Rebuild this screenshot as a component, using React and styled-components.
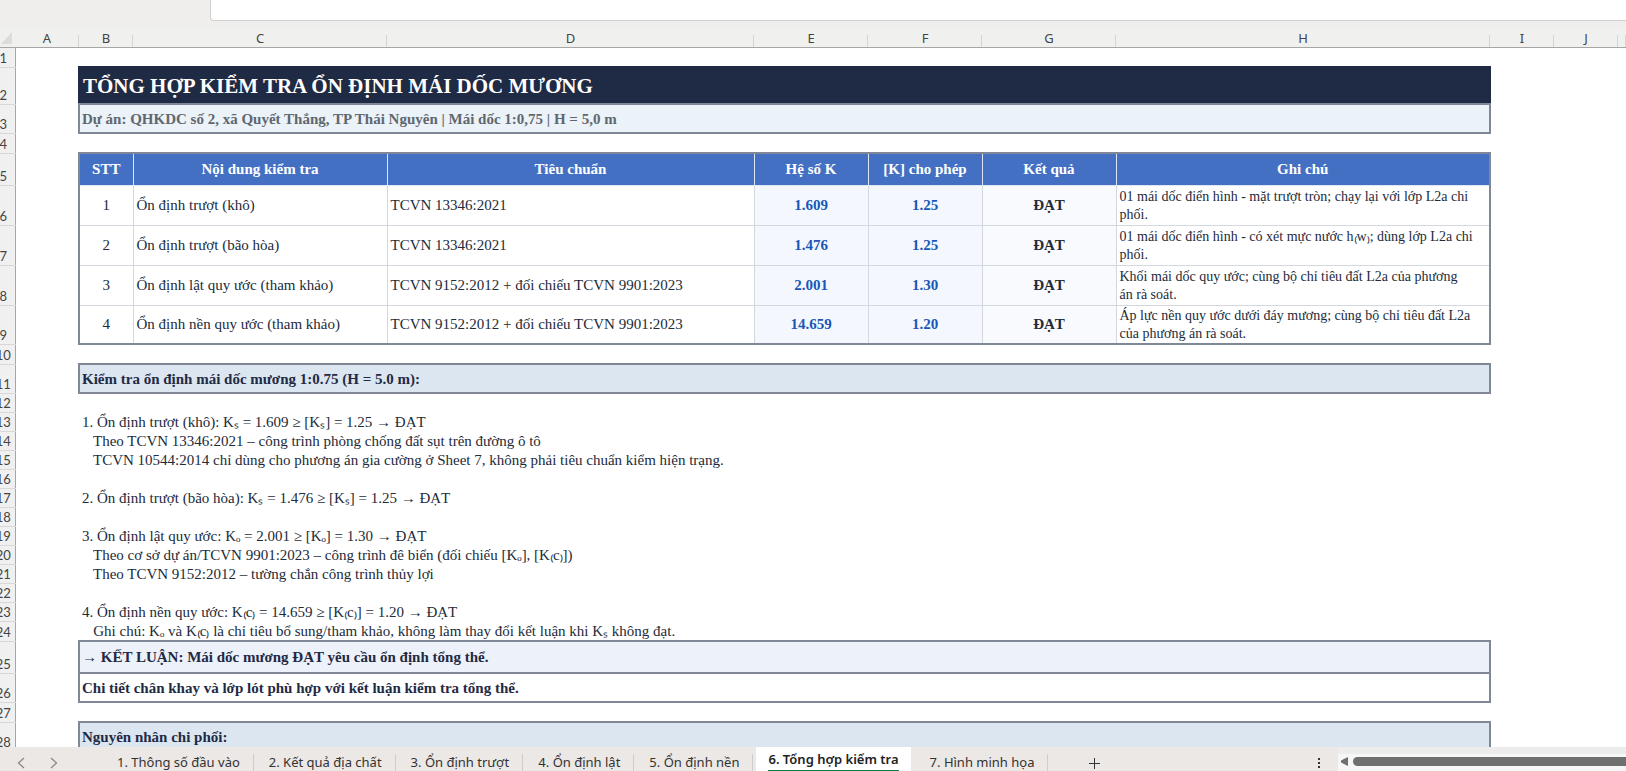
import React from "react";
import styled, {createGlobalStyle} from "styled-components";

const GlobalStyle = createGlobalStyle`
    * {
        box-sizing: border-box;
    }

    body {
        margin: 0;
        overflow: hidden;
        background-color: #fff;
    }
`;

const UI_FONT = `"Noto Sans", "Open Sans", sans-serif`;
const CELL_FONT = `"Liberation Serif", "Times New Roman", serif`;

const NAVY = "#1f2a44";
const FRAME = "#808797";
const LINE = "#d3d7de";

const Whole = styled.div`
    height: 100vh;

    display: flex;
    flex-direction: column;

    font-family: ${UI_FONT};
    background-color: #fff;
`;

/* FORMULA BAR */
const FormulaBar = styled.header`
    height: 27px;
    flex: none;
    padding: 0 0 6px 210px;

    display: flex;

    background-color: #f0eeec;
`;

const FormulaInput = styled.textarea`
    flex: 1;
    height: 21px;
    padding: 0 8px;

    border: 1px solid #d2d0ce;
    border-width: 0 0 1px 1px;
    border-radius: 0 0 0 4px;
    outline: none;
    resize: none;

    background-color: #fff;
`;

/* SHEET */
const SheetArea = styled.main`
    flex: 1;
    min-height: 0;
    overflow: hidden;
`;

/* the row numbers are scrolled partly out of the window */
const Sheet = styled.table`
    width: calc(100% + 8px);
    margin-left: -8px;

    table-layout: fixed;
    border-collapse: collapse;
`;

const Col = styled.col`
    width: ${(props) => (props.$w ? `${props.$w}px` : "auto")};
`;

const HeadRow = styled.tr`
    height: 20px;
`;

const ColHead = styled.th`
    padding: 3px 0 0;

    font-size: 13px;
    font-weight: 400;
    line-height: 16px;
    color: #444;

    border-bottom: 1px solid #a6a6a6;
    background: linear-gradient(#d4d4d4, #d4d4d4) right bottom / 1px 12px no-repeat #f0f0ef;
`;

const Corner = styled.td`
    padding: 0 3px 3px 0;

    text-align: right;
    vertical-align: bottom;
    line-height: 0;

    border-bottom: 1px solid #a6a6a6;
    background-color: #f0f0ef;
`;

const Row = styled.tr`
    height: ${(props) => props.$h}px;
`;

const RowHead = styled.th`
    padding: 0 0 1px;

    font-family: Lato, ${UI_FONT};
    font-size: 13px;
    font-weight: 400;
    line-height: 16px;
    color: #444;
    vertical-align: bottom;

    border-right: 1px solid #a6a6a6;
    border-bottom: 1px solid #d8d8d8;
    background-color: #f0f0f0;
`;

const Blank = styled.td`
    padding: 0;
`;

const Band = styled.td`
    padding: 0 2px;

    font-family: ${CELL_FONT};
    font-size: 15px;
    font-weight: 700;
    line-height: 18px;
    color: ${(props) => props.$color || NAVY};
    white-space: nowrap;

    border: 2px solid ${FRAME};
    background-color: ${(props) => props.$bg || "#fff"};
`;

const TitleBand = styled(Band)`
    padding: 0 3px;

    font-size: 21px;
    line-height: 24px;
    color: #fff;

    border-color: ${NAVY} ${NAVY} ${FRAME};
    background-color: ${NAVY};
`;

const TextLine = styled.td`
    padding: 1px 3px 0;

    font-family: ${CELL_FONT};
    font-size: 15px;
    line-height: 18px;
    color: #222b3a;
    white-space: pre;
`;

const TableHead = styled.th`
    padding: 0;

    font-family: ${CELL_FONT};
    font-size: 15px;
    line-height: 18px;
    color: #fff;

    border: 1px solid #dfe6f3;
    border-top: 2px solid ${FRAME};
    background-color: #4470c4;

    &:nth-child(3) {
        border-left: 2px solid ${FRAME};
    }

    &:nth-child(9) {
        border-right: 2px solid ${FRAME};
    }
`;

const Data = styled.td`
    padding: 0 3px;

    font-family: ${CELL_FONT};
    font-size: 15px;
    font-weight: ${(props) => (props.$bold ? 700 : 400)};
    line-height: 18px;
    text-align: ${(props) => props.$align || "left"};
    color: ${(props) => props.$color || "#222b3a"};

    border: 1px solid ${LINE};
    background-color: ${(props) => props.$bg || "#fff"};

    &:nth-child(3) {
        border-left: 2px solid ${FRAME};
    }
`;

const Note = styled(Data)`
    padding: 1px 0 0 3px;

    font-size: 14px;
    white-space: pre-line;

    border-right: 2px solid ${FRAME};
`;

const DataRow = styled(Row)`
    ${Data} {
        border-bottom: ${(props) => (props.$last ? `2px solid ${FRAME}` : `1px solid ${LINE}`)};
    }
`;

/* SHEET TABS */
const TabBar = styled.footer`
    height: 24px;
    flex: none;
    overflow: hidden;

    display: flex;
    align-items: flex-start;

    background-color: #ebe8e6;
`;

const IconButton = styled.button`
    width: ${(props) => props.$w || 33}px;
    height: 32px;
    flex: none;
    padding: 0;

    display: flex;
    align-items: center;
    justify-content: center;

    color: ${(props) => props.$color || "#333"};

    border: 0;
    background: none;
`;

const Tabs = styled.nav`
    display: flex;
    align-items: flex-start;

    margin-left: 36px;
`;

const Tab = styled.button`
    height: 30px;
    padding: 0 14px 0 15px;

    font-family: ${UI_FONT};
    font-size: 13px;
    line-height: 20px;
    color: #333;
    white-space: nowrap;

    border: 0;
    background: linear-gradient(#cfcdcc, #cfcdcc) right bottom / 1px 23px no-repeat;
`;

const ActiveTab = styled(Tab)`
    height: 26px;
    padding: 0 12px;
    margin: 0 4px 0 3px;

    font-weight: 600;
    color: #222;

    background: #fff;

    span {
        display: block;
        height: 24px;
        padding-top: 1px;

        border-bottom: 2px solid #107c41;
    }
`;

const ScrollSide = styled.div`
    flex: 1;

    display: flex;
    align-items: flex-start;
    justify-content: flex-end;
`;

const ScrollTrack = styled.div`
    width: 288px;
    height: 24px;
    padding: 0 0 2px 3px;
    margin-left: 11px;

    display: flex;
    align-items: center;
    gap: 5px;

    border-top: 7px solid #ececec;
    background-color: #f6f6f6;
`;

const ScrollThumb = styled.div`
    flex: 1;
    height: 9px;

    border-radius: 5px 0 0 5px;
    background-color: #6f6f6f;
`;

const columns = [
    {name: "A", w: 64},
    {name: "B", w: 54},
    {name: "C", w: 254},
    {name: "D", w: 367},
    {name: "E", w: 114},
    {name: "F", w: 114},
    {name: "G", w: 134},
    {name: "H", w: 374},
    {name: "I", w: 64},
    {name: "J", w: 64},
    {name: ""},
];

const heads = ["STT", "Nội dung kiểm tra", "Tiêu chuẩn", "Hệ số K", "[K] cho phép", "Kết quả", "Ghi chú"];

const checks = [
    {
        name: "Ổn định trượt (khô)",
        standard: "TCVN 13346:2021",
        k: "1.609",
        limit: "1.25",
        note: "01 mái dốc điển hình - mặt trượt tròn; chạy lại với lớp L2a chi\nphối.",
    },
    {
        name: "Ổn định trượt (bão hòa)",
        standard: "TCVN 13346:2021",
        k: "1.476",
        limit: "1.25",
        note: "01 mái dốc điển hình - có xét mực nước h₍w₎; dùng lớp L2a chi\nphối.",
    },
    {
        name: "Ổn định lật quy ước (tham khảo)",
        standard: "TCVN 9152:2012 + đối chiếu TCVN 9901:2023",
        k: "2.001",
        limit: "1.30",
        note: "Khối mái dốc quy ước; cùng bộ chỉ tiêu đất L2a của phương\nán rà soát.",
    },
    {
        name: "Ổn định nền quy ước (tham khảo)",
        standard: "TCVN 9152:2012 + đối chiếu TCVN 9901:2023",
        k: "14.659",
        limit: "1.20",
        note: "Áp lực nền quy ước dưới đáy mương; cùng bộ chỉ tiêu đất L2a\ncủa phương án rà soát.",
    },
];

// rows 13 to 24
const lines = [
    "1. Ổn định trượt (khô): Kₛ = 1.609 ≥ [Kₛ] = 1.25 → ĐẠT",
    "   Theo TCVN 13346:2021 – công trình phòng chống đất sụt trên đường ô tô",
    "   TCVN 10544:2014 chỉ dùng cho phương án gia cường ở Sheet 7, không phải tiêu chuẩn kiểm hiện trạng.",
    "",
    "2. Ổn định trượt (bão hòa): Kₛ = 1.476 ≥ [Kₛ] = 1.25 → ĐẠT",
    "",
    "3. Ổn định lật quy ước: Kₒ = 2.001 ≥ [Kₒ] = 1.30 → ĐẠT",
    "   Theo cơ sở dự án/TCVN 9901:2023 – công trình đê biển (đối chiếu [Kₒ], [K₍c₎])",
    "   Theo TCVN 9152:2012 – tường chắn công trình thủy lợi",
    "",
    "4. Ổn định nền quy ước: K₍c₎ = 14.659 ≥ [K₍c₎] = 1.20 → ĐẠT",
    "   Ghi chú: Kₒ và K₍c₎ là chỉ tiêu bổ sung/tham khảo, không làm thay đổi kết luận khi Kₛ không đạt.",
];

const SheetRow = ({n, h, as: RowTag = Row, last, children}) => (
    <RowTag $h={h} $last={last}>
        <RowHead scope="row">{n}</RowHead>
        <Blank />
        {children || <Blank colSpan={7} />}
        <Blank colSpan={3} />
    </RowTag>
);

const App = () => {
    return (
        <Whole>
            <GlobalStyle />

            <FormulaBar>
                <FormulaInput aria-label="Formula" />
            </FormulaBar>

            <SheetArea>
                <Sheet>
                    <colgroup>
                        <Col $w={23} />
                        {columns.map((col) => (
                            <Col key={col.name} $w={col.w} />
                        ))}
                    </colgroup>
                    <thead>
                        <HeadRow>
                            <Corner>
                                <svg width="11" height="12" viewBox="0 0 11 12">
                                    <path d="M11 0V12H0Z" fill="#dcdcdc" />
                                </svg>
                            </Corner>
                            {columns.map((col) => (
                                <ColHead key={col.name} scope="col">{col.name}</ColHead>
                            ))}
                        </HeadRow>
                    </thead>
                    <tbody>
                        <SheetRow n={1} h={20} />
                        <SheetRow n={2} h={37}>
                            <TitleBand colSpan={7}>TỔNG HỢP KIỂM TRA ỔN ĐỊNH MÁI DỐC MƯƠNG</TitleBand>
                        </SheetRow>
                        <SheetRow n={3} h={29}>
                            <Band colSpan={7} $bg="#ebf2f8" $color="#5f6770">
                                Dự án: QHKDC số 2, xã Quyết Thắng, TP Thái Nguyên | Mái dốc 1:0,75 | H = 5,0 m
                            </Band>
                        </SheetRow>
                        <SheetRow n={4} h={20} />

                        {/* SUMMARY */}
                        <SheetRow n={5} h={32}>
                            {heads.map((head) => (
                                <TableHead key={head} scope="col">{head}</TableHead>
                            ))}
                        </SheetRow>
                        {checks.map((check, i) => (
                            <SheetRow
                                key={check.name}
                                n={6 + i}
                                h={i === checks.length - 1 ? 39 : 40}
                                as={DataRow}
                                last={i === checks.length - 1}
                            >
                                <Data $align="center">{i + 1}</Data>
                                <Data>{check.name}</Data>
                                <Data>{check.standard}</Data>
                                <Data $align="center" $bold $color="#1857b8" $bg="#f4f7fe">{check.k}</Data>
                                <Data $align="center" $bold $color="#1857b8" $bg="#f4f7fe">{check.limit}</Data>
                                <Data $align="center" $bold $bg="#f9fafe">ĐẠT</Data>
                                <Note>{check.note}</Note>
                            </SheetRow>
                        ))}
                        <SheetRow n={10} h={20} />

                        {/* DETAIL */}
                        <SheetRow n={11} h={29}>
                            <Band colSpan={7} $bg="#dce6f1">Kiểm tra ổn định mái dốc mương 1:0.75 (H = 5.0 m):</Band>
                        </SheetRow>
                        <SheetRow n={12} h={19} />
                        {lines.map((line, i) => (
                            <SheetRow key={i} n={13 + i} h={i === lines.length - 1 ? 20 : 19}>
                                <TextLine colSpan={7}>{line}</TextLine>
                            </SheetRow>
                        ))}

                        {/* CONCLUSION */}
                        <SheetRow n={25} h={32}>
                            <Band colSpan={7} $bg="#ecf1fa">→ KẾT LUẬN: Mái dốc mương ĐẠT yêu cầu ổn định tổng thể.</Band>
                        </SheetRow>
                        <SheetRow n={26} h={29}>
                            <Band colSpan={7}>Chi tiết chân khay và lớp lót phù hợp với kết luận kiểm tra tổng thể.</Band>
                        </SheetRow>
                        <SheetRow n={27} h={20} />
                        <SheetRow n={28} h={29}>
                            <Band colSpan={7} $bg="#dce6f1">Nguyên nhân chi phối:</Band>
                        </SheetRow>
                    </tbody>
                </Sheet>
            </SheetArea>

            <TabBar>
                <IconButton aria-label="Previous sheet" $w={42} $color="#8a8a8a">
                    <svg width="8" height="12" viewBox="0 0 8 12" fill="none" stroke="currentColor" strokeWidth="1.3">
                        <path d="M7 1L1.500 6L7 11" />
                    </svg>
                </IconButton>
                <IconButton aria-label="Next sheet" $w={24} $color="#8a8a8a">
                    <svg width="8" height="12" viewBox="0 0 8 12" fill="none" stroke="currentColor" strokeWidth="1.3">
                        <path d="M1 1L6.500 6L1 11" />
                    </svg>
                </IconButton>
                <Tabs>
                    <Tab>1. Thông số đầu vào</Tab>
                    <Tab>2. Kết quả địa chất</Tab>
                    <Tab>3. Ổn định trượt</Tab>
                    <Tab>4. Ổn định lật</Tab>
                    <Tab>5. Ổn định nền</Tab>
                    <ActiveTab aria-current="page"><span>6. Tổng hợp kiểm tra</span></ActiveTab>
                    <Tab>7. Hình minh họa</Tab>
                </Tabs>
                <IconButton aria-label="New sheet" $w={92}>
                    <svg width="11" height="11" viewBox="0 0 11 11" stroke="currentColor">
                        <path d="M5.500 0V11M0 5.500H11" />
                    </svg>
                </IconButton>
                <ScrollSide>
                    <IconButton aria-label="Resize tabs" $w={16}>
                        <svg width="2" height="10" viewBox="0 0 2 10" fill="currentColor">
                            <path d="M0 0H2V2H0ZM0 4H2V6H0ZM0 8H2V10H0Z" />
                        </svg>
                    </IconButton>
                    <ScrollTrack>
                        <svg width="7" height="9" viewBox="0 0 7 9">
                            <path d="M7 0V9L0 5.500V3.500Z" fill="#6f6f6f" />
                        </svg>
                        <ScrollThumb />
                    </ScrollTrack>
                </ScrollSide>
            </TabBar>
        </Whole>
    )
}

export default App;
